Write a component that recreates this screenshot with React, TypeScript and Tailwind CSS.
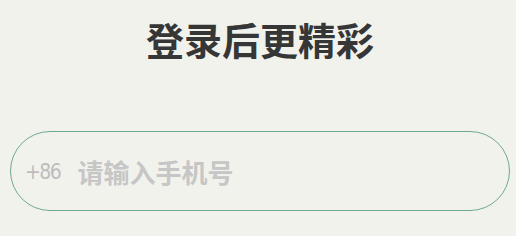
export default function App() {
  return (
    <div className="min-h-[236px] w-full bg-[#f2f2ed] pl-[10px] pr-[6px] pt-[16px] font-['Noto_Sans_CJK_SC',sans-serif]">
      <h1 className="text-center text-[38px] font-bold leading-[46px] text-[#363636]">登录后更精彩</h1>
      <div className="mt-[69px] flex h-[80px] items-center rounded-full border border-[#6fa992] pl-[14px]">
        <span className="pt-[3px] text-[21px] tracking-[-1.5px] text-[#bdbdbd] font-['DejaVu_Sans_Condensed','Noto_Sans_CJK_SC',sans-serif]">+86</span>
        <input
          className="ml-[17px] min-w-0 flex-1 bg-transparent text-[26px] font-bold text-[#333] outline-none placeholder:text-[#c6c6c6]"
          placeholder="请输入手机号"
        />
      </div>
    </div>
  )
}
